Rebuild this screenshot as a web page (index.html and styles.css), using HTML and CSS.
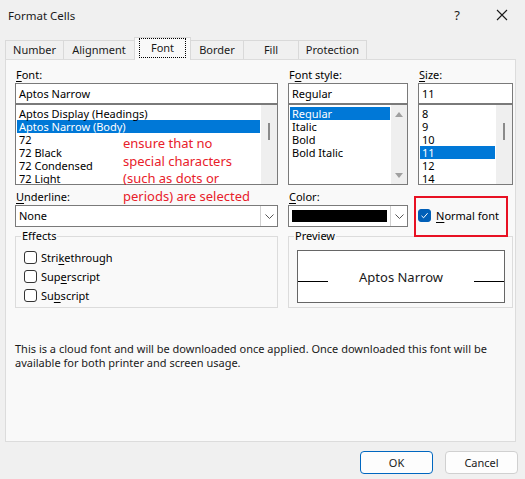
FILE: index.html
```html
<!DOCTYPE html>
<html lang="en">
<head>
    <meta charset="UTF-8" />
    <title>Format Cells</title>
    <link rel="stylesheet" href="styles.css">
</head>
<body>
    <div class="dialog">
        <div class="titlebar">
            <span class="title">Format Cells</span>
            <span class="help">?</span>
            <svg class="close" width="12" height="12" viewBox="0 0 12 12">
                <path d="M1 1 L11 11 M11 1 L1 11" stroke="#1a1a1a" stroke-width="1.1" fill="none" />
            </svg>
        </div>

        <div class="tabs">
            <div class="tab tab-number">Number</div>
            <div class="tab tab-alignment">Alignment</div>
            <div class="tab tab-font active"><span class="focus">Font</span></div>
            <div class="tab tab-border">Border</div>
            <div class="tab tab-fill">Fill</div>
            <div class="tab tab-protection">Protection</div>
        </div>

        <div class="panel">
            <div class="grid">
                <label class="label"><u>F</u>ont:</label>
                <label class="label">F<u>o</u>nt style:</label>
                <label class="label"><u>S</u>ize:</label>

                <div class="field">Aptos Narrow</div>
                <div class="field">Regular</div>
                <div class="field">11</div>

                <div class="list font-list">
                    <ul class="items">
                        <li>Aptos Display (Headings)</li>
                        <li class="selected">Aptos Narrow (Body)</li>
                        <li>72</li>
                        <li>72 Black</li>
                        <li>72 Condensed</li>
                        <li>72 Light</li>
                    </ul>
                    <div class="scrollbar"><div class="thumb"></div></div>
                    <div class="annotation">ensure that no<br>special characters<br>(such as dots or<br>periods) are selected</div>
                </div>
                <div class="list">
                    <ul class="items">
                        <li class="selected">Regular</li>
                        <li>Italic</li>
                        <li>Bold</li>
                        <li>Bold Italic</li>
                    </ul>
                    <div class="scrollbar arrows">
                        <span class="arrow up"></span>
                        <span class="arrow down"></span>
                    </div>
                </div>
                <div class="list">
                    <ul class="items">
                        <li>8</li>
                        <li>9</li>
                        <li>10</li>
                        <li class="selected">11</li>
                        <li>12</li>
                        <li>14</li>
                    </ul>
                    <div class="scrollbar"><div class="thumb"></div></div>
                </div>

                <label class="label label-gap"><u>U</u>nderline:</label>
                <label class="label label-gap"><u>C</u>olor:</label>
                <div class="normal-font">
                    <span class="checkbox checked">
                        <svg width="9" height="9" viewBox="0 0 9 9">
                            <path d="M1.5 4.8 L3.6 6.8 L7.6 2.2" stroke="#fff" stroke-width="1" fill="none" />
                        </svg>
                    </span>
                    <span><u>N</u>ormal font</span>
                    <div class="highlight-box"></div>
                </div>

                <div class="dropdown">
                    <span class="value">None</span>
                    <span class="chevron"><svg width="9" height="5" viewBox="0 0 9 5"><path d="M0.5 0.5 L4.5 4.5 L8.5 0.5" stroke="#555" fill="none" /></svg></span>
                </div>
                <div class="dropdown">
                    <span class="swatch"></span>
                    <span class="chevron"><svg width="9" height="5" viewBox="0 0 9 5"><path d="M0.5 0.5 L4.5 4.5 L8.5 0.5" stroke="#555" fill="none" /></svg></span>
                </div>

                <fieldset class="group effects">
                    <legend>Effects</legend>
                    <div class="check-row"><span class="checkbox"></span><span>Stri<u>k</u>ethrough</span></div>
                    <div class="check-row"><span class="checkbox"></span><span>Sup<u>e</u>rscript</span></div>
                    <div class="check-row"><span class="checkbox"></span><span>Su<u>b</u>script</span></div>
                </fieldset>
                <fieldset class="group preview">
                    <legend>Preview</legend>
                    <div class="preview-box">
                        <span class="rule"></span>
                        <span class="sample">Aptos Narrow</span>
                        <span class="rule"></span>
                    </div>
                </fieldset>
            </div>

            <p class="note">This is a cloud font and will be downloaded once applied. Once downloaded this font will be<br>available for both printer and screen usage.</p>
        </div>

        <div class="buttons">
            <button class="btn primary">OK</button>
            <button class="btn">Cancel</button>
        </div>
    </div>
</body>
</html>
```

FILE: styles.css
```css
body {
    margin: 0;
    padding: 0;
    background: #f0f0f0;
    font-family: "Noto Sans", "Open Sans", sans-serif;
    font-size: 11px;
    color: #000;
}

u {
    text-decoration-thickness: 1px;
    text-underline-offset: 2px;
}

.dialog {
    width: 525px;
    height: 479px;
    background: #f0f0f0;
    overflow: hidden;
}

.titlebar {
    height: 30px;
    display: flex;
    align-items: center;
    padding-left: 8px;
}

.titlebar .title {
    flex: 1;
    font-size: 11.5px;
    color: #1a1a1a;
}

.titlebar .help {
    font-size: 13px;
    margin-right: 36px;
    color: #1a1a1a;
}

.titlebar .close {
    margin-right: 17px;
}

.tabs {
    display: flex;
    align-items: flex-end;
    height: 29px;
    padding-left: 5px;
}

.tab {
    height: 18px;
    line-height: 18px;
    text-align: center;
    border: 1px solid #d9d9d9;
    border-bottom: none;
    margin-left: -1px;
    background: #f0f0f0;
    color: #1a1a1a;
}

.tab:first-child {
    margin-left: 0;
}

.tab-number { width: 57px; }
.tab-alignment { width: 70px; }
.tab-font { width: 55px; }
.tab-border { width: 52px; }
.tab-fill { width: 54px; }
.tab-protection { width: 67px; }

.tab.active {
    height: 22px;
    line-height: 20px;
    background: #f9f9f9;
    position: relative;
    top: 1px;
    z-index: 2;
}

.tab .focus {
    display: inline-block;
    width: 45px;
    height: 18px;
    line-height: 17px;
    border: 1px dotted #000;
}

.panel {
    margin-left: 5px;
    width: 500px;
    height: 374px;
    padding: 7px 0 0 9px;
    background: #f9f9f9;
    border: 1px solid #dcdcdc;
    position: relative;
    z-index: 1;
}

.grid {
    display: grid;
    grid-template-columns: 263px 120px 95px;
    column-gap: 10px;
}

.label {
    height: 16px;
    padding-left: 1px;
    line-height: 15px;
}

.label-gap {
    margin-top: 4px;
}

.field {
    height: 19px;
    border: 1px solid #7a7a7a;
    background: #fff;
    padding-left: 3px;
    line-height: 19px;
}

.list {
    position: relative;
    height: 79px;
    border: 1px solid #7a7a7a;
    background: #fff;
    display: flex;
    overflow: hidden;
}

.font-list {
    overflow: visible;
}

.items {
    list-style: none;
    margin: 0;
    padding: 2px 1px 0 1px;
    flex: 1;
    overflow: hidden;
}

.items li {
    height: 13px;
    line-height: 13px;
    padding-left: 2px;
    white-space: nowrap;
}

.items li.selected {
    background: #0078d7;
    color: #fff;
}

.scrollbar {
    width: 16px;
    background: #efefef;
    position: relative;
}

.scrollbar .thumb {
    position: absolute;
    left: 7px;
    top: 18px;
    width: 2px;
    height: 17px;
    background: #8a8a8a;
}

.scrollbar.arrows {
    display: flex;
    flex-direction: column;
    justify-content: space-between;
    align-items: center;
    padding: 7px 0 6px;
}

.arrow {
    width: 0;
    height: 0;
    border-left: 4px solid transparent;
    border-right: 4px solid transparent;
}

.arrow.up {
    border-bottom: 5px solid #a0a0a0;
}

.arrow.down {
    border-top: 5px solid #a0a0a0;
}

.annotation {
    position: absolute;
    left: 107px;
    top: 30px;
    font-size: 13px;
    line-height: 17.6px;
    color: #e8202a;
    white-space: nowrap;
}

.normal-font {
    grid-row: span 2;
    display: flex;
    align-items: center;
    gap: 5px;
    margin-top: 19px;
    position: relative;
}

.highlight-box {
    position: absolute;
    left: -4px;
    top: -8px;
    width: 90px;
    height: 37px;
    border: 2px solid #e81123;
}

.checkbox {
    width: 11px;
    height: 11px;
    border: 1px solid #333;
    border-radius: 3px;
    background: #fff;
    display: inline-flex;
    align-items: center;
    justify-content: center;
    flex-shrink: 0;
}

.checkbox.checked {
    background: #005fb8;
    border-color: #005fb8;
}

.dropdown {
    height: 20px;
    border: 1px solid #7a7a7a;
    background: #fff;
    display: flex;
    align-items: stretch;
}

.dropdown .value {
    flex: 1;
    padding-left: 3px;
    line-height: 20px;
}

.dropdown .swatch {
    flex: 1;
    margin: 4px 3px;
    background: #000;
}

.dropdown .chevron {
    width: 16px;
    border-left: 1px solid #d0d0d0;
    display: flex;
    align-items: center;
    justify-content: center;
}

.group {
    box-sizing: border-box;
    margin: 3px 0 0 0;
    height: 78px;
    border: 1px solid #dcdcdc;
    min-width: 0;
}

.group legend {
    padding: 0 1px;
    margin-left: -3px;
    line-height: 12px;
}

.effects {
    padding: 6px 0 0 8px;
}

.check-row {
    display: flex;
    align-items: center;
    gap: 4px;
    height: 19px;
}

.preview {
    grid-column: span 2;
    padding: 8px 7px 0 8px;
}

.preview-box {
    height: 51px;
    border: 1px solid #666;
    background: #fff;
    display: flex;
    align-items: center;
    justify-content: space-between;
}

.preview-box .rule {
    width: 30px;
    height: 1px;
    background: #000;
    margin-top: 10px;
}

.preview-box .sample {
    font-size: 13px;
    color: #1a1a1a;
}

.note {
    margin: 34px 0 0 0;
    line-height: 14px;
    color: #1a1a1a;
}

.buttons {
    display: flex;
    justify-content: flex-end;
    gap: 12px;
    padding: 9px 7px 0 0;
}

.btn {
    width: 73px;
    height: 23px;
    font-family: inherit;
    font-size: 11px;
    color: #1a1a1a;
    background: #fdfdfd;
    border: 1px solid #d0d0d0;
    border-radius: 4px;
}

.btn.primary {
    border-color: #0067c0;
}
```
